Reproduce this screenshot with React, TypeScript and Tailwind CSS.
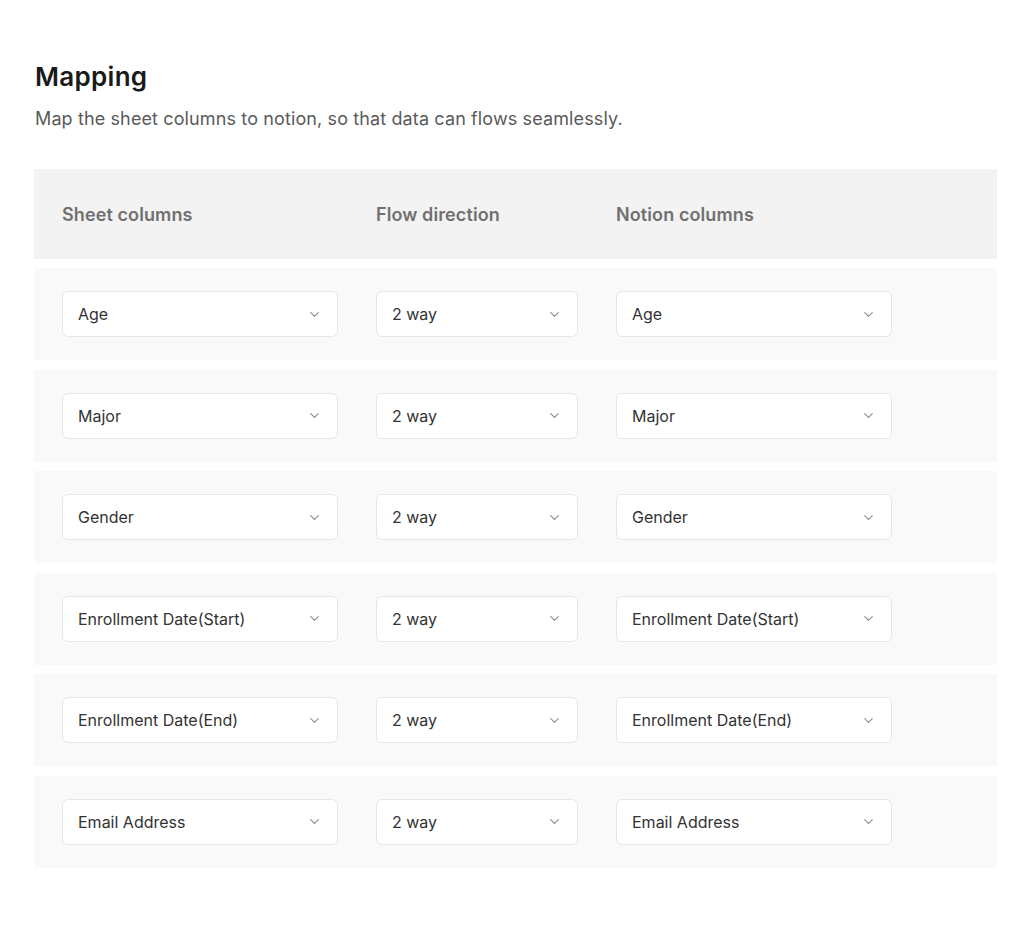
import React from 'react';
import { ChevronDown } from 'lucide-react';

const rows = [
  { sheet: 'Age', flow: '2 way', notion: 'Age' },
  { sheet: 'Major', flow: '2 way', notion: 'Major' },
  { sheet: 'Gender', flow: '2 way', notion: 'Gender' },
  { sheet: 'Enrollment Date(Start)', flow: '2 way', notion: 'Enrollment Date(Start)' },
  { sheet: 'Enrollment Date(End)', flow: '2 way', notion: 'Enrollment Date(End)' },
  { sheet: 'Email Address', flow: '2 way', notion: 'Email Address' },
];

function Select({ value, width }: { value: string; width: string }) {
  return (
    <div
      className={`${width} h-[46px] flex items-center justify-between pl-[15px] pr-[15px] bg-white border border-[#e6e6e6] rounded-[6px]`}
    >
      <span className="text-[16px] text-[#333333]">{value}</span>
      <ChevronDown className="w-[15px] h-[15px] text-[#8a8a8a]" strokeWidth={1.7} />
    </div>
  );
}

export default function App() {
  return (
    <div className="min-h-screen bg-white font-['Inter',sans-serif] pt-[60px] px-[34px]">
      <h1 className="text-[26px] font-semibold text-[#1a1a1a] leading-[34px] pl-[1px] tracking-[0.3px]">Mapping</h1>
      <p className="text-[18px] text-[#5a5a5a] mt-[13px] leading-[24px] pl-[1px] tracking-[0.12px]">
        Map the sheet columns to notion, so that data can flows seamlessly.
      </p>

      <div className="mt-[38px] w-[963px]">
        {/* Header */}
        <div className="h-[90px] bg-[#f3f3f3] flex items-center pl-[28px] text-[18px] font-semibold text-[#707070] tracking-[0.1px]">
          <div className="w-[314px]">Sheet columns</div>
          <div className="w-[240px]">Flow direction</div>
          <div>Notion columns</div>
        </div>

        {/* Rows */}
        <div className="mt-[9px] flex flex-col gap-[9.6px]">
          {rows.map((r, i) => (
            <div key={i} className="h-[92px] bg-[#f9f9f9] flex items-center pl-[28px]">
              <div className="w-[314px]">
                <Select value={r.sheet} width="w-[276px]" />
              </div>
              <div className="w-[240px]">
                <Select value={r.flow} width="w-[202px]" />
              </div>
              <Select value={r.notion} width="w-[276px]" />
            </div>
          ))}
        </div>
      </div>
    </div>
  );
}
